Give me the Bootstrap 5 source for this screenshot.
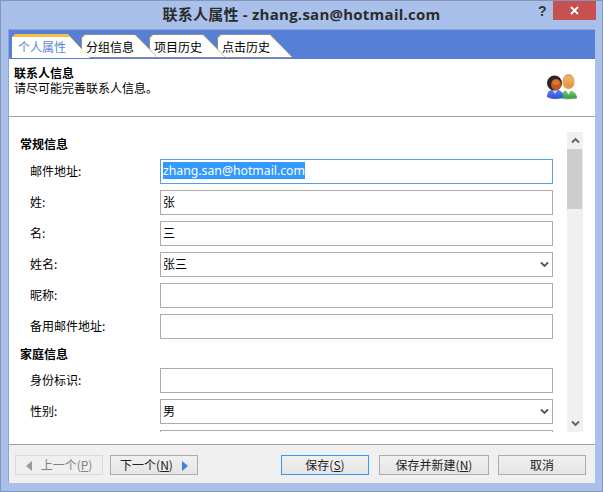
<!DOCTYPE html>
<html lang="zh">
<head>
<meta charset="utf-8">
<title>联系人属性</title>
<link href="https://cdn.jsdelivr.net/npm/bootstrap@5.3.0/dist/css/bootstrap.min.css" rel="stylesheet">
<style>
html,body{height:492px;overflow:hidden}
body{background:#a9c0ea;font:12px/16px "Noto Sans CJK SC","Liberation Sans",sans-serif;color:#000}
.winframe{width:603px;height:492px;border:1px solid #8296b8}
.titlerow{height:28px;position:relative}
.wintitle{font:700 15px/26px "Open Sans","Noto Sans CJK SC",sans-serif;color:#2b2b2b;letter-spacing:.25px}
.helpmark{position:absolute;left:537px;top:0;font:700 14px/20px "Liberation Sans",sans-serif;color:#333}
.closebtn{position:absolute;left:552px;top:0;width:43px;height:19px;background:#c75050}
.client{margin:0 7px;height:454px;border:1px solid #8ba3d6;border-bottom:0;border-right:0;background:#fff}
.tabband{height:29px;background:#5580d6;padding:4px 0 0 3px}
.tabx{height:24px;flex:none;position:relative;isolation:isolate;background:#8d8d8d;clip-path:polygon(0 3px,3px 0,calc(100% - 22px) 0,100% 100%,0 100%);padding:5px 0 0 5px;margin-right:-9px;line-height:16px}
.tabx::before{content:"";position:absolute;inset:1px;background:#fff;clip-path:polygon(0 3px,3px 0,calc(100% - 22px) 0,100% 100%,0 100%);z-index:-1}
.tabon{background:#f5c04a;color:#5b86d8;padding-left:6px}
.tabon::before{inset:3px 0 0 0;clip-path:polygon(0 0,calc(100% - 20px) 0,100% 100%,0 100%)}
.tabx.tw78{width:78px}.tabx.tw77{width:77px}.tabx.tw76{width:76px}
.infohead{height:58px;border-bottom:1px solid #a0a0a0;padding:8px 10px 0 5px;font-family:"Liberation Sans","Noto Sans CJK SC",sans-serif;line-height:15px}
.infoicon{margin:7px 7px 0 0}
.scrollzone{height:327px;padding:15px 12px 12px 0}
.formclip{flex:1;height:300px;overflow:hidden}
.secthead{font-weight:700;line-height:16px;padding:4px 0 0 11px;margin-bottom:7px}
.secthead.later{padding-top:1px;margin-bottom:6px}
.frow{height:25px;margin-bottom:6px;padding-left:21px;padding-right:14px}
.flabel{width:130px;flex:none;padding-bottom:2px}
.form-control.fbox,.form-select.fbox{height:25px;min-height:25px;border-radius:0;border:1px solid #ababab;padding:0 2px 2px;font:12px/21px "Noto Sans CJK SC",sans-serif;color:#000;background-color:#fff;box-shadow:none}
.form-select.fbox{background-image:url("data:image/svg+xml,%3Csvg xmlns='http://www.w3.org/2000/svg' viewBox='0 0 9 7'%3E%3Cpath fill='none' stroke='%23555' stroke-width='1.8' d='M1 1.5l3.5 3.5L8 1.5'/%3E%3C/svg%3E");background-size:9px 7px;background-position:right 3px center}
.form-control.focusbox{border-color:#569de5;display:flex;align-items:center}
.seltext{background:#3399ff;color:#fff;font:12.25px/17px "Noto Sans",sans-serif}
.scrolltrack{width:16px;background:#f0f0f0;height:300px;flex:none}
.sarrow{height:17px}
.sthumb{height:60px;background:#cdcdcd;margin-right:1px}
.footbar{height:39px;background:#f0f0f0;border-top:1px solid #a0a0a0;padding:10px 9px 0 6px}
.wbtn{height:20px;border:1px solid #acacac;border-radius:0;background:linear-gradient(#f0f0f0,#e5e5e5);padding:0;font:12px/18px "Noto Sans CJK SC",sans-serif;color:#222;width:88px;flex:none}
.wbtn.wide{width:110px}
.wbtn.offb{border-color:#d9d9d9;color:#838383;background:#efefef}
.wbtn.defb{border-color:#3399ff}
.tri{display:inline-block;border-style:solid;border-color:transparent;border-width:5px 0 5px 6px;vertical-align:-1px}
.triblue{border-left-color:#3f7fe0;margin-left:9px}
.trigray{border-width:5px 6px 5px 0;border-right-color:#9a9a9a;margin-right:9px}
.gapl{margin-left:7px}.gaps{margin-left:10px}.gapt{margin-left:9px}
</style>
</head>
<body>
<div class="winframe">
  <div class="titlerow text-center">
    <span class="wintitle">联系人属性 - zhang.san@hotmail.com</span>
    <span class="helpmark">?</span>
    <div class="closebtn d-flex align-items-center justify-content-center">
      <svg width="9" height="9" viewBox="0 0 9 9"><path d="M1 1l7 7M8 1L1 8" stroke="#fff" stroke-width="1.8"/></svg>
    </div>
  </div>
  <div class="client">
    <div class="tabband d-flex">
      <div class="tabx tabon tw78 z-3">个人属性</div>
      <div class="tabx tw77 z-2">分组信息</div>
      <div class="tabx tw77 z-1">项目历史</div>
      <div class="tabx tw76">点击历史</div>
    </div>
    <div class="infohead d-flex justify-content-between">
      <div>
        <div class="fw-bold">联系人信息</div>
        <div>请尽可能完善联系人信息。</div>
      </div>
      <svg class="infoicon" width="31" height="26" viewBox="0 0 31 26">
        <defs>
          <linearGradient id="gA" x1="0" y1="0" x2="0" y2="1"><stop offset="0" stop-color="#f6b768"/><stop offset="1" stop-color="#df8f3c"/></linearGradient>
          <linearGradient id="gB" x1="0" y1="0" x2="0" y2="1"><stop offset="0" stop-color="#5f86f5"/><stop offset="1" stop-color="#2f4fd8"/></linearGradient>
          <linearGradient id="gC" x1="0" y1="0" x2="0" y2="1"><stop offset="0" stop-color="#7fd07a"/><stop offset="1" stop-color="#2f9e3f"/></linearGradient>
        </defs>
        <ellipse cx="20" cy="24" rx="10.500" ry="1.500" fill="#bdbdbd"/>
        <path d="M14 24c0-5 3-8 7-8s9 3 9 8c-5 1-11 1-16 0z" fill="url(#gC)"/>
        <path d="M18.500 15.500l3 5 3-5z" fill="#fff"/>
        <ellipse cx="21.500" cy="8" rx="6" ry="7" fill="url(#gA)"/>
        <path d="M15.500 8c0-5 3-8 6-8s6 3 6 8c-1-4-3-5.500-6-5.500s-5 1.500-6 5.500z" fill="#d2a76a"/>
        <path d="M0 23c0-5 3-8 7.500-8s9 3 9 8c-5 2.500-12 2.500-16.500 0z" fill="url(#gB)"/>
        <path d="M5.500 16l2.500 4 2.500-4z" fill="#d5e3ff"/>
        <circle cx="7.500" cy="9" r="7.500" fill="#262626"/>
        <ellipse cx="9" cy="10.500" rx="5" ry="5.800" fill="#c4561c"/>
        <ellipse cx="9" cy="8.500" rx="3.500" ry="2.500" fill="#dc7a34"/>
      </svg>
    </div>
    <div class="scrollzone d-flex">
      <div class="formclip">
        <div class="secthead">常规信息</div>
        <div class="frow d-flex align-items-center"><div class="flabel">邮件地址:</div><div class="form-control fbox focusbox"><span class="seltext">zhang.san@hotmail.com</span></div></div>
        <div class="frow d-flex align-items-center"><div class="flabel">姓:</div><input class="form-control fbox" value="张"></div>
        <div class="frow d-flex align-items-center"><div class="flabel">名:</div><input class="form-control fbox" value="三"></div>
        <div class="frow d-flex align-items-center"><div class="flabel">姓名:</div><select class="form-select fbox"><option>张三</option></select></div>
        <div class="frow d-flex align-items-center"><div class="flabel">昵称:</div><input class="form-control fbox"></div>
        <div class="frow d-flex align-items-center"><div class="flabel">备用邮件地址:</div><input class="form-control fbox"></div>
        <div class="secthead later">家庭信息</div>
        <div class="frow d-flex align-items-center"><div class="flabel">身份标识:</div><input class="form-control fbox"></div>
        <div class="frow d-flex align-items-center"><div class="flabel">性别:</div><select class="form-select fbox"><option>男</option></select></div>
        <div class="frow d-flex align-items-center"><div class="flabel"></div><input class="form-control fbox"></div>
      </div>
      <div class="scrolltrack d-flex flex-column">
        <div class="sarrow d-flex align-items-center justify-content-center"><svg width="9" height="7" viewBox="0 0 9 7"><path d="M1 5.500L4.500 2 8 5.500" fill="none" stroke="#606060" stroke-width="1.800"/></svg></div>
        <div class="sthumb"></div>
        <div class="flex-grow-1"></div>
        <div class="sarrow d-flex align-items-center justify-content-center"><svg width="9" height="7" viewBox="0 0 9 7"><path d="M1 1.500L4.500 5 8 1.500" fill="none" stroke="#606060" stroke-width="1.800"/></svg></div>
      </div>
    </div>
    <div class="footbar d-flex">
      <button class="btn wbtn offb" type="button"><span class="tri trigray"></span>上一个(<u>P</u>)</button>
      <button class="btn wbtn gapl" type="button">下一个(<u>N</u>)<span class="tri triblue"></span></button>
      <button class="btn wbtn defb ms-auto" type="button">保存(<u>S</u>)</button>
      <button class="btn wbtn wide gaps" type="button">保存并新建(<u>N</u>)</button>
      <button class="btn wbtn gapt" type="button">取消</button>
    </div>
  </div>
</div>
<script src="https://cdn.jsdelivr.net/npm/bootstrap@5.3.0/dist/js/bootstrap.bundle.min.js"></script>
</body>
</html>
